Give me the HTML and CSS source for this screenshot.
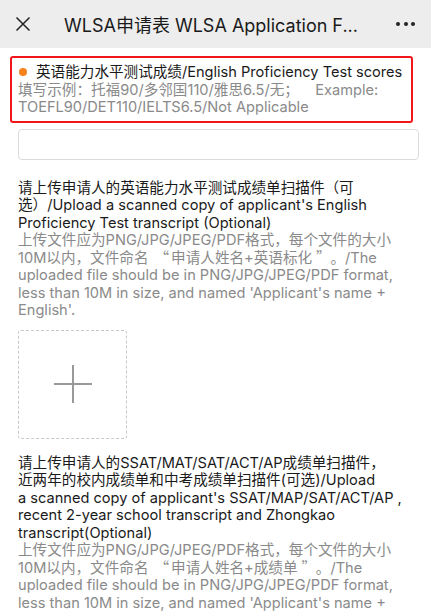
FILE: index.html
```html
<!DOCTYPE html>
<html lang="zh">
<head>
<meta charset="utf-8">
<link rel="stylesheet" href="styles.css">
</head>
<body>
<header class="topbar">
  <svg class="close" width="16" height="16" viewBox="0 0 16 16"><path d="M1.5 1.5 L14.5 14.5 M14.5 1.5 L1.5 14.5" stroke="#222" stroke-width="1.5" fill="none"/></svg>
  <div class="title">WLSA申请表 WLSA Application F...</div>
  <div class="more"><span></span><span></span><span></span></div>
</header>
<main class="content">
  <section class="field highlight">
    <div class="label"><span class="dot"></span>英语能力水平测试成绩/English Proficiency Test scores</div>
    <div class="hint">填写示例：托福90/多邻国110/雅思6.5/无；&nbsp;&nbsp;&nbsp; Example: TOEFL90/DET110/IELTS6.5/Not Applicable</div>
  </section>
  <div class="input"></div>

  <section class="field q">
    <div class="label">请上传申请人的英语能力水平测试成绩单扫描件（可选）/Upload a scanned copy of applicant's English Proficiency Test transcript (Optional)</div>
    <div class="hint">上传文件应为PNG/JPG/JPEG/PDF格式，每个文件的大小10M以内，文件命名<span class="cjk open">“</span>申请人姓名+英语标化<span class="cjk shut">”</span>。/The uploaded file should be in PNG/JPG/JPEG/PDF format, less than 10M in size, and named 'Applicant's name + English'.</div>
  </section>
  <div class="upload">
    <svg width="40" height="40" viewBox="0 0 40 40"><path d="M20 1 V39 M1 20 H39" stroke="#999" stroke-width="2" fill="none"/></svg>
  </div>

  <section class="field q last">
    <div class="label">请上传申请人的SSAT/MAT/SAT/ACT/AP成绩单扫描件，<br>近两年的校内成绩单和中考成绩单扫描件(可选)/Upload<br>a scanned copy of applicant's SSAT/MAP/SAT/ACT/AP , recent 2-year school transcript and Zhongkao transcript(Optional)</div>
    <div class="hint">上传文件应为PNG/JPG/JPEG/PDF格式，每个文件的大小10M以内，文件命名<span class="cjk open">“</span>申请人姓名+成绩单<span class="cjk shut">”</span>。/The uploaded file should be in PNG/JPG/JPEG/PDF format, less than 10M in size, and named 'Applicant's name + Transcript'.</div>
  </section>
</main>
</body>
</html>
```
FILE: styles.css
```css
* { box-sizing: border-box; }
html, body { margin: 0; padding: 0; }
body {
  width: 431px;
  height: 614px;
  overflow: hidden;
  background: #fff;
  font-family: Inter, "Noto Sans CJK SC", sans-serif;
  color: #1a1a1a;
}
.topbar {
  height: 48px;
  background: #ededed;
  display: flex;
  align-items: center;
  padding: 0 16px 0 15px;
}
.close { flex: none; }
.title {
  flex: 1;
  margin-left: 33px;
  font-size: 18px;
  color: #1a1a1a;
  white-space: nowrap;
}
.more { display: flex; gap: 3.5px; }
.more span { width: 4px; height: 4px; border-radius: 50%; background: #222; }
.content { padding: 8px 12px 0 10px; }
.field { font-size: 14.6px; line-height: 17.5px; }
.cjk {
  font-family: "Noto Sans CJK SC", sans-serif;
  line-height: 1;
}
.cjk.open { padding: 0 2px 0 6px; }
.cjk.shut { padding: 0 7px 0 4px; }
.highlight {
  border: 2px solid #f2161b;
  border-radius: 3px;
  padding: 6px 6px 4px 6px;
  width: 403px;
}
.dot {
  display: inline-block;
  width: 8px; height: 8px;
  border-radius: 50%;
  background: #f5841f;
  margin: 0 9px 2px 1px;
  vertical-align: middle;
}
.label { color: #1a1a1a; }
.hint { color: #8a8a8a; }
.input {
  margin: 6px 0 0 8px;
  width: 401px;
  height: 31px;
  border: 1px solid #dcdcdc;
  border-radius: 4px;
}
.q { padding: 0 0 0 8px; margin-top: 20px; width: 392px; }
.upload {
  margin: 10px 0 0 8px;
  width: 109px;
  height: 109px;
  border: 1px dashed #c8c8c8;
  border-radius: 3px;
  display: flex;
  align-items: center;
  justify-content: center;
}
.q.last { margin-top: 16px; }
```
